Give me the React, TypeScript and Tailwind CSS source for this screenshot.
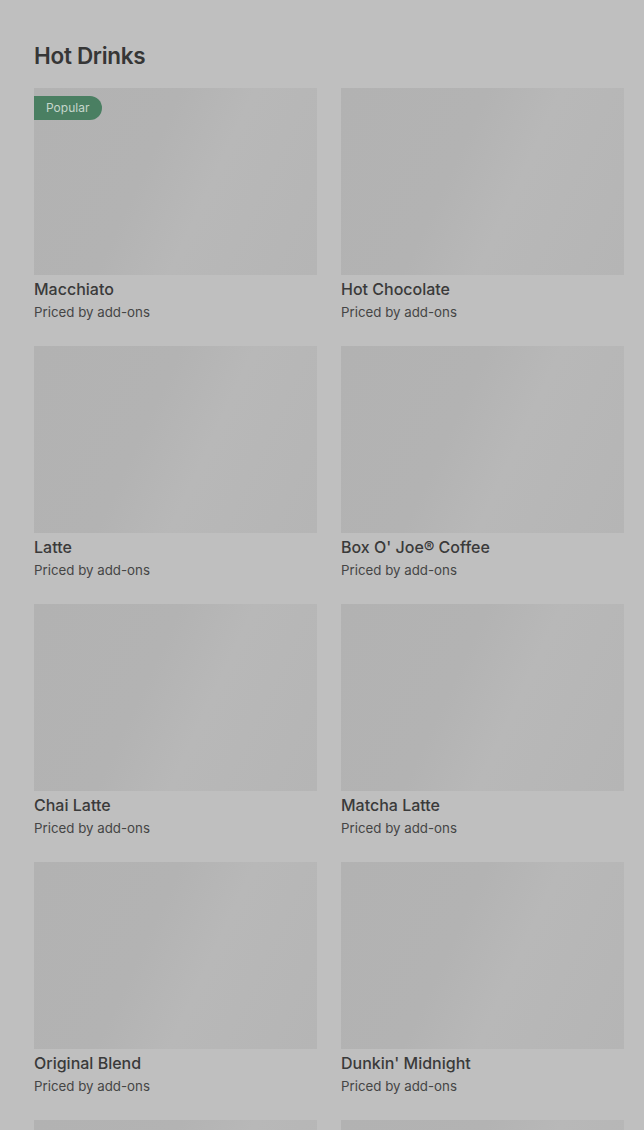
import React from "react";

const items = [
  "Macchiato",
  "Hot Chocolate",
  "Latte",
  "Box O' Joe® Coffee",
  "Chai Latte",
  "Matcha Latte",
  "Original Blend",
  "Dunkin' Midnight",
];

export default function App() {
  return (
    <div
      className="w-[644px] h-[1130px] bg-[#bfbfbf] pl-[34px] pr-[20px] pt-[40px] overflow-hidden"
      style={{ fontFamily: "Inter, 'Noto Sans', sans-serif" }}
    >
      <h1 className="text-[22.5px] leading-[32px] font-semibold text-[#363636] tracking-[-0.3px] mb-[16px]">
        Hot Drinks
      </h1>
      <div className="grid grid-cols-2 gap-x-[24px] gap-y-[23px]">
        {items.map((name, i) => (
          <div key={name} className="flex flex-col">
            <div className="relative h-[187px] bg-[linear-gradient(115deg,#b2b2b2_0%,#b3b3b3_40%,#b8b8b8_60%,#b5b5b5_100%)]">
              {i === 0 && (
                <span className="absolute left-0 top-[8px] h-[24px] w-[68px] flex items-center pl-[12px] text-[12px] text-[#c6d6cc] bg-[#4a7f62] rounded-r-full">
                  Popular
                </span>
              )}
            </div>
            <div className="text-[16px] leading-[24px] font-medium text-[#3a3a3a] mt-[2px]">
              {name}
            </div>
            <div className="text-[13.3px] leading-[22px] text-[#454545]">
              Priced by add-ons
            </div>
          </div>
        ))}
        <div className="h-[187px] bg-[linear-gradient(115deg,#b2b2b2_0%,#b3b3b3_40%,#b8b8b8_60%,#b5b5b5_100%)]" />
        <div className="h-[187px] bg-[linear-gradient(115deg,#b2b2b2_0%,#b3b3b3_40%,#b8b8b8_60%,#b5b5b5_100%)]" />
      </div>
    </div>
  );
}
